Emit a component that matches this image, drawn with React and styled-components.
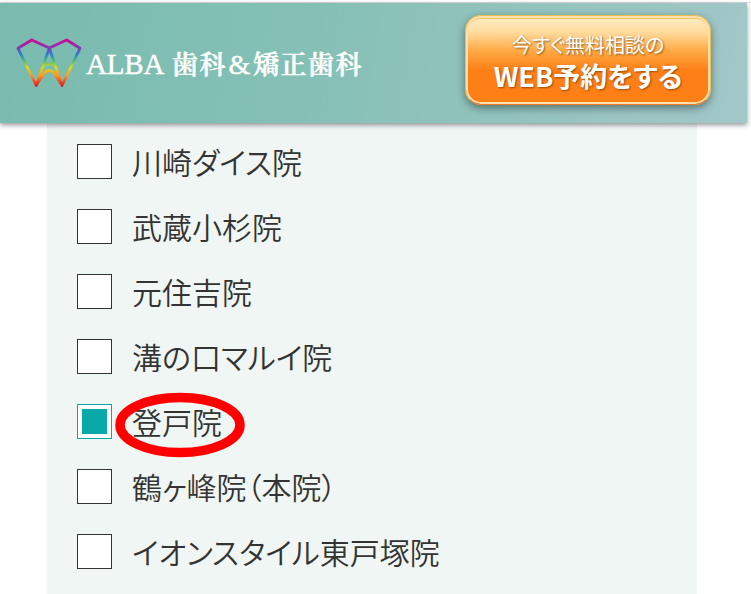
import React from 'react';
import styled, { createGlobalStyle } from 'styled-components';

const Global = createGlobalStyle`
  * { box-sizing: border-box; }
  html, body { margin: 0; background: #fff; overflow: hidden; }
  body { font-family: "Noto Sans CJK JP", sans-serif; color: #333; font-feature-settings: "palt"; }
`;
const Page = styled.div`
  width: 751px;
  height: 594px;
  padding-top: 2px;
  overflow: hidden;
  display: flex;
  flex-direction: column;
`;
const TopLine = styled.div`
  flex: none;
  height: 1px;
  background: #dedede;
`;
const Header = styled.header`
  flex: none;
  width: 747px;
  height: 120px;
  padding: 12px 0 0 16px;
  display: flex;
  align-items: flex-start;
  background: linear-gradient(100deg, #79bbae 0%, #84c0b6 40%, #8fc2bb 60%, #a2c7c8 100%);
  box-shadow: 0 2px 5px rgba(0, 0, 0, 0.42);
  z-index: 1;
`;
const Logo = styled.div`
  width: 449px;
  height: 90px;
  display: flex;
  align-items: center;
  color: #fff;
`;
const Mark = styled.svg`
  flex: none;
  width: 66px;
  height: 52px;
  margin-top: 6px;
`;
const LogoLatin = styled.span`
  width: 87px;
  margin: 7px 0 0 4px;
  font: 29px/40px "Liberation Serif", serif;
  letter-spacing: -0.2px;
  white-space: nowrap;
  -webkit-text-stroke: 0.4px #fff;
`;
const LogoKanji = styled.span`
  font: 600 26px/40px "Noto Serif CJK JP", "Noto Sans CJK JP", serif;
  letter-spacing: 1.5px;
  margin: 7px 0 0 -1px;
  white-space: nowrap;
  -webkit-text-stroke: 0.5px #fff;
`;
const Amp = styled.span`
  display: inline-block;
  width: 26px;
  font-family: "Liberation Serif", serif;
  font-size: 28px;
  font-weight: 400;
  text-align: center;
`;
const Reserve = styled.button`
  width: 246px;
  height: 90px;
  padding: 0;
  border: 1px solid #eebd50;
  border-bottom-color: #ec7c22;
  border-radius: 16px;
  color: #fff;
  font-family: inherit;
  font-feature-settings: inherit;
  background: linear-gradient(180deg, #ffedc8 0%, #ffdc9f 18%, #ffa842 40%, #ff7f17 62%, #ff7f17 100%);
  box-shadow: inset 0 0 0 2px #ffdfb0, inset 0 3px 0 0 #f2c45c, 0 3px 8px rgba(0, 0, 0, 0.42);
  text-shadow: 1px 1px 2px rgba(90, 50, 0, 0.65);
  display: flex;
  flex-direction: column;
  align-items: center;
`;
const Small = styled.span`
  font-size: 20px;
  line-height: 28px;
  margin-top: 15px;
`;
const Large = styled.span`
  font-size: 27px;
  line-height: 34px;
  font-weight: 700;
`;
const Panel = styled.main`
  flex: 1;
  width: 650px;
  margin-left: 47px;
  padding: 21px 30px 0;
  background: #f0f6f4;
  display: flex;
  flex-direction: column;
  gap: 30px;
`;
const Option = styled.label`
  flex: none;
  height: 35px;
  display: flex;
  align-items: center;
  gap: 20px;
`;
const Box = styled.span`
  width: 35px;
  height: 35px;
  padding: 4px;
  border: 1px solid ${(p) => (p.$on ? '#0aa9a9' : '#333')};
  background: #fff;
`;
const Fill = styled.span`
  display: block;
  width: 25px;
  height: 25px;
  background: #0aa9a9;
`;
const Name = styled.span`
  position: relative;
  margin-top: -2px;
  font-size: 30px;
  font-weight: 350;
  line-height: 44px;
  white-space: nowrap;
`;
const Ring = styled.svg`
  position: absolute;
  left: -18px;
  top: -8px;
  width: 132px;
  height: 68px;
`;

const options = ['川崎ダイス院', '武蔵小杉院', '元住吉院', '溝の口マルイ院', '登戸院', '鶴ヶ峰院（本院）', 'イオンスタイル東戸塚院'];
const selected = '登戸院';

export default function App() {
  return (
    <Page>
      <Global />
      <TopLine />
      <Header>
        <Logo>
          <Mark viewBox="16 37 66 52" fill="none">
            <defs>
              <linearGradient id="rainbow" gradientUnits="userSpaceOnUse" x1="0" y1="39" x2="0" y2="87">
                <stop offset="0" stopColor="#d9008f" />
                <stop offset=".16" stopColor="#9030b0" />
                <stop offset=".32" stopColor="#2c80cc" />
                <stop offset=".46" stopColor="#55b878" />
                <stop offset=".59" stopColor="#d4dd20" />
                <stop offset=".76" stopColor="#ff9820" />
                <stop offset="1" stopColor="#e20820" />
              </linearGradient>
            </defs>
            <g stroke="url(#rainbow)" strokeLinejoin="round">
              <path d="M49.3 48 31.7 40 18 48.3 36.3 85.5 49.3 48 62 85.5 80 48.3 66.7 40Z" strokeWidth="2.8" />
              <path d="M44.5 64H54.5 M36.8 84 44.8 72.5Q49.3 68.5 53.6 72.5L61.5 84" strokeWidth="3" />
            </g>
          </Mark>
          <LogoLatin>ALBA</LogoLatin>
          <LogoKanji>歯科<Amp>&amp;</Amp>矯正歯科</LogoKanji>
        </Logo>
        <Reserve>
          <Small>今すぐ無料相談の</Small>
          <Large>WEB予約をする</Large>
        </Reserve>
      </Header>
      <Panel>
        {options.map((name) => (
          <Option key={name}>
            <Box $on={name === selected}>{name === selected && <Fill />}</Box>
            <Name>
              {name}
              {name === selected && (
                <Ring viewBox="0 0 132 68"><ellipse cx="66" cy="34" rx="60" ry="27.5" fill="none" stroke="#f00" strokeWidth="9.5" /></Ring>
              )}
            </Name>
          </Option>
        ))}
      </Panel>
    </Page>
  );
}
